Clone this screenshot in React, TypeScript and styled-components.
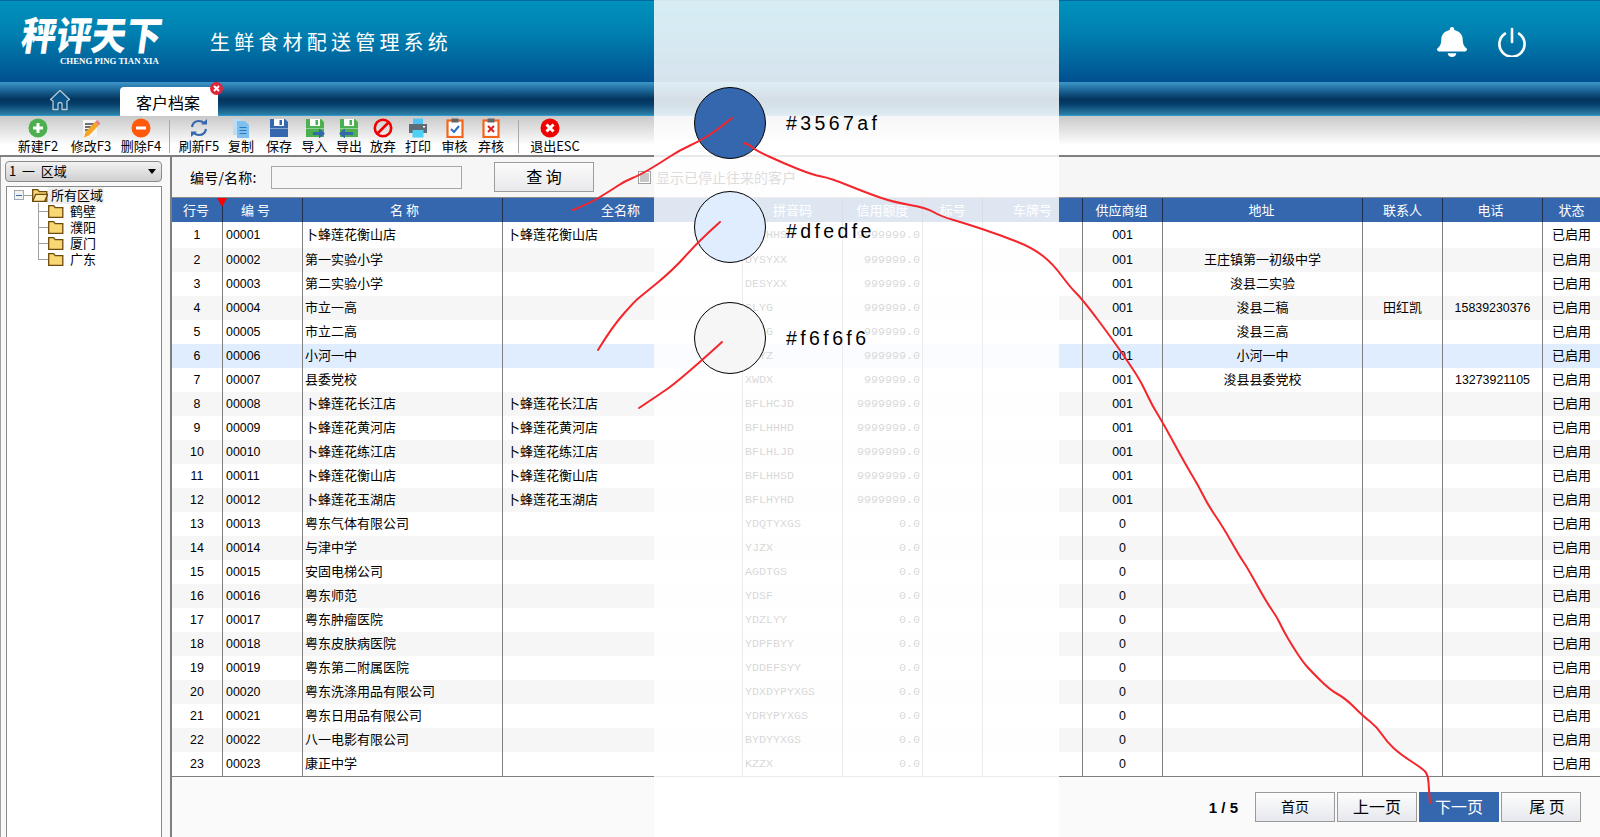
import React from "react";
import styled, { createGlobalStyle } from "styled-components";
import { FaBell } from "react-icons/fa";

const CJK = `"Noto Sans CJK SC", "Liberation Sans", sans-serif`;
const MONO = `"Liberation Mono", "Noto Sans CJK SC", monospace`;
const NUM = `"Liberation Sans", "Noto Sans CJK SC", sans-serif`;

const Global = createGlobalStyle`
  html, body { margin: 0; padding: 0; background: #fff; }
  body { font-family: ${CJK}; color: #000; overflow: hidden; }
  * { box-sizing: border-box; }
`;

const Page = styled.div`
  position: relative;
  width: 1600px;
  height: 837px;
  display: flex;
  flex-direction: column;
  overflow: hidden;
`;

/* ---------- top header ---------- */
const Header = styled.header`
  height: 82px;
  flex: none;
  display: flex;
  align-items: center;
  padding: 0 73px 0 19px;
  border-top: 1px solid #0067a3;
  background: linear-gradient(#0092bc 0%, #0080b0 40%, #00508f 100%);
  color: #fff;
`;
const Logo = styled.div`
  width: 191px;
  display: flex;
  flex-direction: column;
  margin-top: -2px;
`;
const LogoMark = styled.div`
  font-size: 35px;
  font-weight: 900;
  line-height: 38px;
  white-space: nowrap;
  transform: skewX(-8deg) scaleY(1.12);
  transform-origin: left bottom;
`;
const LogoSub = styled.div`
  font-family: "Liberation Serif", serif;
  font-weight: 700;
  font-size: 8.8px;
  line-height: 10px;
  margin: 2px 0 0 41px;
  white-space: nowrap;
`;
const Title = styled.div`
  font-size: 20px;
  letter-spacing: 4.2px;
  line-height: 28px;
  white-space: nowrap;
`;
const HeaderIcons = styled.div`
  margin-left: auto;
  display: flex;
  align-items: center;
  gap: 30px;
  margin-top: 1px;
`;

/* ---------- tab bar ---------- */
const TabBar = styled.nav`
  height: 34px;
  flex: none;
  display: flex;
  align-items: flex-end;
  padding-left: 49px;
  border-bottom: 1px solid #2c9ad0;
  background: linear-gradient(#3d97c8 0%, #1f6c9e 22%, #03355e 52%, #06406c 68%, #2d81a8 100%);
`;
const HomeIcon = styled.svg`
  width: 22px;
  height: 22px;
  margin-bottom: 4px;
  flex: none;
`;
const Tab = styled.div`
  position: relative;
  width: 98px;
  height: 29px;
  margin: 0 0 -1px 49px;
  padding-left: 16px;
  background: #fff;
  border-radius: 4px 4px 0 0;
  font-size: 16px;
  line-height: 30px;
`;
const TabClose = styled.svg`
  position: absolute;
  right: -5px;
  top: -5px;
  width: 13px;
  height: 13px;
`;

/* ---------- toolbar ---------- */
const Toolbar = styled.div`
  height: 41px;
  flex: none;
  display: flex;
  padding-left: 12px;
  border-bottom: 2px solid #7f7f7f;
  background: linear-gradient(#c9c9c9 0%, #e2e2e2 35%, #fff 75%);
`;
const ToolButton = styled.div<{ $w: number }>`
  width: ${(p) => p.$w}px;
  flex: none;
  display: flex;
  flex-direction: column;
  align-items: center;
  padding-top: 2px;
`;
const ToolIcon = styled.svg<{ $shift?: number }>`
  width: 20px;
  height: 20px;
  flex: none;
  margin-right: ${(p) => p.$shift ?? 0}px;
`;
const ToolLabel = styled.span`
  font-size: 13px;
  line-height: 15px;
  white-space: nowrap;
`;
const ToolSep = styled.div<{ $w: number }>`
  width: ${(p) => p.$w}px;
  flex: none;
  display: flex;
  justify-content: center;
  padding: 4px 0 2px;
  &::before {
    content: "";
    width: 1px;
    background: #a8a8a8;
  }
`;

/* ---------- body ---------- */
const Content = styled.div`
  flex: 1;
  min-height: 0;
  display: flex;
`;
const Side = styled.aside`
  width: 170px;
  flex: none;
  display: flex;
  flex-direction: column;
  padding: 4px 8px 0 4px;
  border-left: 1px solid #a0a0a0;
  background: #f8f8f8;
`;
const Select = styled.div`
  height: 21px;
  display: flex;
  align-items: center;
  padding: 0 5px 2px 3px;
  border: 1px solid #8a8a8a;
  border-radius: 4px;
  background: linear-gradient(#f2f2f2, #cfcfcf);
  font-size: 13px;
  white-space: pre;
`;
const Caret = styled.span`
  margin: 2px 0 0 auto;
  border: 4px solid transparent;
  border-top: 5px solid #000;
  border-bottom: 0;
`;
const Tree = styled.div`
  flex: 1;
  margin: 4px 0 0 1px;
  padding: 0 0 0 7px;
  border: 1px solid #8a8a8a;
  border-bottom: 0;
  background: #fff;
`;
const TreeRoot = styled.div`
  height: 16px;
  display: flex;
  align-items: center;
`;
const Expander = styled.span`
  width: 10px;
  height: 10px;
  flex: none;
  display: flex;
  align-items: center;
  justify-content: center;
  border: 1px solid #a0a8b4;
  background: #f2f2f2;
  &::before {
    content: "";
    width: 6px;
    height: 1px;
    background: #3567af;
  }
`;
const RootLink = styled.span`
  width: 8px;
  height: 1px;
  flex: none;
  background: #a0a0a0;
`;
const TreeLabel = styled.span<{ $selected?: boolean }>`
  font-size: 13px;
  line-height: 16px;
  padding: 0 1px 1px 3px;
  margin-left: ${(p) => (p.$selected ? 0 : 3)}px;
  background: ${(p) => (p.$selected ? "#f0f0f0" : "transparent")};
  white-space: nowrap;
`;
const TreeChild = styled.div<{ $last?: boolean }>`
  position: relative;
  height: 16px;
  display: flex;
  align-items: center;
  padding-left: 34px;
  &::before {
    content: "";
    position: absolute;
    left: 24px;
    top: 0;
    width: 10px;
    height: ${(p) => (p.$last ? "8px" : "16px")};
    border-left: 1px solid #a0a0a0;
  }
  &::after {
    content: "";
    position: absolute;
    left: 24px;
    top: 8px;
    width: 10px;
    height: 1px;
    background: #a0a0a0;
  }
`;
const FolderIcon = styled.svg`
  width: 16px;
  height: 14px;
  flex: none;
`;

const Main = styled.main`
  flex: 1;
  min-width: 0;
  display: flex;
  flex-direction: column;
  border-left: 2px solid #7f7f7f;
`;
const Filter = styled.div`
  height: 41px;
  flex: none;
  display: flex;
  align-items: center;
  padding-left: 18px;
  border-bottom: 1px solid #8c8c8c;
  background: #f6f6f6;
`;
const FilterLabel = styled.label`
  width: 81px;
  flex: none;
  font-size: 14px;
  letter-spacing: 0.2px;
  white-space: nowrap;
`;
const FilterInput = styled.div`
  width: 191px;
  height: 23px;
  flex: none;
  border: 1px solid #a8a8a8;
  background: #f6f6f6;
`;
const QueryButton = styled.div`
  width: 100px;
  height: 30px;
  flex: none;
  margin-left: 32px;
  padding-bottom: 2px;
  display: flex;
  align-items: center;
  justify-content: center;
  border: 1px solid #9c9c9c;
  background: linear-gradient(#fbfbfb, #e9e9ec);
  font-size: 16px;
  white-space: pre;
`;
const Check = styled.span`
  width: 13px;
  height: 13px;
  flex: none;
  margin-left: 44px;
  display: flex;
  align-items: center;
  justify-content: center;
  border: 1px solid #a0a0a0;
  background: #fff;
  &::before {
    content: "";
    width: 9px;
    height: 9px;
    background: #c8c8c8;
  }
`;
const CheckText = styled.span`
  margin-left: 5px;
  font-size: 14px;
  color: #222;
  white-space: nowrap;
`;

const COLUMNS = "51px 80px 200px 240px 100px 80px 60px 100px 80px 200px 80px 100px 57px";
const HeadRow = styled.div`
  position: relative;
  height: 24px;
  flex: none;
  display: grid;
  grid-template-columns: ${COLUMNS};
  background: #3567af;
`;
const HeadCell = styled.div<{ $shift: number }>`
  display: flex;
  align-items: center;
  justify-content: center;
  padding: 0 ${(p) => (p.$shift < 0 ? -2 * p.$shift : 0)}px 2px ${(p) => (p.$shift > 0 ? 2 * p.$shift : 0)}px;
  border-right: 1px solid #1c2f50;
  color: #fff;
  font-size: 13px;
  white-space: pre;
  &:last-of-type { border-right: 0; }
`;
const SortMark = styled.span`
  position: absolute;
  left: 45px;
  top: 0;
  border-left: 5.5px solid transparent;
  border-right: 5.5px solid transparent;
  border-top: 9px solid #ff0000;
`;
const Rows = styled.div`
  flex: 1;
  min-height: 0;
  display: flex;
  flex-direction: column;
`;
const Row = styled.div<{ $tone: "white" | "stripe" | "active"; $first?: boolean }>`
  height: ${(p) => (p.$first ? 26 : 24)}px;
  flex: none;
  display: grid;
  grid-template-columns: ${COLUMNS};
  background: ${(p) => (p.$tone === "active" ? "#dfedfe" : p.$tone === "stripe" ? "#f6f6f6" : "#fff")};
`;
const Cell = styled.div<{ $align?: "left" | "center" | "right"; $kind?: "text" | "num" | "code"; $pad?: number }>`
  display: flex;
  align-items: center;
  justify-content: ${(p) => (p.$align === "center" ? "center" : p.$align === "right" ? "flex-end" : "flex-start")};
  padding-bottom: ${(p) => (p.$kind === "num" || p.$kind === "code" ? 0 : 3)}px;
  padding-left: ${(p) => p.$pad ?? 0}px;
  padding-right: ${(p) => (p.$align === "right" ? 2 : 0)}px;
  border-right: 1px solid #808080;
  font-family: ${(p) => (p.$kind === "num" ? NUM : p.$kind === "code" ? MONO : CJK)};
  font-size: ${(p) => (p.$kind === "num" ? "12.4px" : p.$kind === "code" ? "11.7px" : "13px")};
  white-space: nowrap;
  overflow: hidden;
  &:last-child { border-right: 0; }
`;
const Footer = styled.footer`
  height: 61px;
  flex: none;
  display: flex;
  align-items: flex-start;
  justify-content: flex-end;
  gap: 2px;
  padding: 15px 19px 0 0;
  border-top: 1px solid #808080;
  background: #fafafa;
`;
const PageCount = styled.span`
  margin-right: 15px;
  font-family: "Liberation Sans", sans-serif;
  font-weight: 700;
  font-size: 15px;
  line-height: 32px;
  white-space: pre;
`;
const PageButton = styled.div<{ $active?: boolean; $small?: boolean; $offset?: number }>`
  width: 80px;
  height: 30px;
  display: flex;
  align-items: center;
  justify-content: center;
  padding-left: ${(p) => p.$offset ?? 0}px;
  padding-bottom: 2px;
  border: ${(p) => (p.$active ? "0" : "1px solid #9a9a9a")};
  background: ${(p) => (p.$active ? "#3567af" : "linear-gradient(#fdfdfd, #e6e8ee)")};
  color: ${(p) => (p.$active ? "#fff" : "#000")};
  font-size: ${(p) => (p.$small ? 14 : 16)}px;
  white-space: pre;
`;

/* ---------- annotation layer over the screenshot ---------- */
const Veil = styled.div`
  position: absolute;
  left: 654px;
  top: 0;
  width: 405px;
  height: 837px;
  background: rgba(255, 255, 255, 0.84);
`;
const Swatch = styled.div<{ $color: string; $top: number }>`
  position: absolute;
  left: 694px;
  top: ${(p) => p.$top}px;
  width: 72px;
  height: 72px;
  border: 1px solid #000;
  border-radius: 50%;
  background: ${(p) => p.$color};
`;
const SwatchText = styled.div<{ $top: number }>`
  position: absolute;
  left: 786px;
  top: ${(p) => p.$top}px;
  font-family: "Liberation Sans", sans-serif;
  font-size: 19.5px;
  line-height: 28px;
  letter-spacing: 3.4px;
  color: #000;
`;
const Ink = styled.svg`
  position: absolute;
  inset: 0;
  width: 1600px;
  height: 837px;
  pointer-events: none;
`;

type P = [number, number];
const smooth = (pts: P[]) => {
  let d = `M${pts[0][0]} ${pts[0][1]}`;
  for (let i = 1; i < pts.length - 1; i++) {
    const mx = (pts[i][0] + pts[i + 1][0]) / 2;
    const my = (pts[i][1] + pts[i + 1][1]) / 2;
    d += ` Q${pts[i][0]} ${pts[i][1]} ${mx} ${my}`;
  }
  const l = pts[pts.length - 1];
  return d + ` L${l[0]} ${l[1]}`;
};

const strokes: P[][] = [
  [[573, 210], [590, 203], [610, 191], [625, 181], [640, 175], [660, 163], [680, 150], [700, 141], [717, 130], [732, 118]],
  [[598, 350], [612, 327], [635, 301], [640, 297], [673, 270], [697, 243], [720, 222]],
  [[639, 408], [660, 394], [673, 385], [700, 362], [722, 342]],
  [[744, 143], [750, 145], [755, 150], [783, 163], [813, 175], [830, 178], [867, 193], [893, 202], [927, 208], [940, 216], [967, 224], [1000, 235], [1033, 248], [1053, 264], [1070, 287], [1083, 300], [1113, 340], [1137, 375], [1145, 390], [1152, 405], [1163, 423], [1187, 467], [1198, 485], [1208, 505], [1223, 527], [1240, 557], [1247, 567], [1267, 603], [1277, 617], [1283, 630], [1293, 647], [1303, 662], [1310, 670], [1330, 690], [1345, 698], [1363, 716], [1377, 727], [1387, 742], [1400, 754], [1423, 769], [1428, 775], [1429, 790], [1430, 803]],
];

/* ---------- icons ---------- */
const Bell = styled(FaBell)`
  width: 30px;
  height: 30px;
  color: #fff;
`;
const PowerIcon = () => (
  <svg width="30" height="30" viewBox="0 0 30 30" fill="none" stroke="#fff" strokeWidth="2.6" strokeLinecap="round">
    <path d="M15 2v13" />
    <path d="M8 6.6a12.6 12.6 0 1 0 14 0" />
  </svg>
);
const Home = () => (
  <HomeIcon viewBox="0 0 22 22" fill="none">
    <path d="M11 1.5 1.5 10.5 4 12v8.5h5v-5q0-2 2-2t2 2v5h5V12l2.500-1.500z" fill="#0a5488" stroke="#b9c9d6" strokeWidth="1.300" strokeLinejoin="round" />
  </HomeIcon>
);
const Circle = ({ c, children }: { c: string; children: React.ReactNode }) => (
  <>
    <circle cx="10" cy="10" r="9.500" fill={c} />
    {children}
  </>
);
const Floppy = ({ c }: { c: string }) => (
  <>
    <path d="M1 1h15l3 3v15H1z" fill={c} />
    <rect x="5" y="1" width="10" height="7" fill="#fff" />
    <rect x="10.500" y="2" width="2.500" height="5" fill={c} />
    <rect x="1" y="10" width="18" height="0.800" fill="#fff" opacity="0.5" />
  </>
);
const Clipboard = ({ children }: { children: React.ReactNode }) => (
  <>
    <rect x="2.500" y="2.500" width="15" height="16.500" fill="#fff" stroke="#f2651f" strokeWidth="2.200" />
    <rect x="6.500" y="0.500" width="7" height="4" fill="#666" />
    {children}
  </>
);
const icons: Record<string, React.ReactNode> = {
  add: (
    <Circle c="#4caf50">
      <path d="M10 5v10M5 10h10" stroke="#fff" strokeWidth="3" />
    </Circle>
  ),
  edit: (
    <>
      <rect x="2" y="2" width="14" height="17" fill="#f4f4f4" />
      <path d="M4 6h9M4 9h7M4 12h4" stroke="#444" strokeWidth="1.500" />
      <path d="M3 19.500l1.500-5.500L14 4l3.500 3.500L8 17.500z" fill="#f5a623" />
      <path d="M14 4l2-2 3.500 3.500-2 2z" fill="#ef7c7c" />
    </>
  ),
  remove: (
    <Circle c="#ff5a0a">
      <path d="M5 10h10" stroke="#fff" strokeWidth="3" />
    </Circle>
  ),
  refresh: (
    <g fill="none" stroke="#3567af" strokeWidth="2.200">
      <path d="M3 9q1-6 7-6 3 0 5 2" />
      <path d="M17 11q-1 6-7 6-3 0-5-2" />
      <path d="M12 6.500h6V1z" fill="#3567af" stroke="none" />
      <path d="M8 13.500H2V19z" fill="#3567af" stroke="none" />
    </g>
  ),
  copy: (
    <>
      <path d="M2 1h9v16H2z" fill="#b9dcf7" />
      <path d="M6 3h8l4 4v13H6z" fill="#7fc0ef" />
      <path d="M8.500 9.500h7M8.500 12.500h7M8.500 15.500h7" stroke="#2a78c0" strokeWidth="1.200" />
    </>
  ),
  save: <Floppy c="#3567af" />,
  import: (
    <>
      <Floppy c="#4caf50" />
      <path d="M8 14h6v-3.500l6 5-6 5V17H8z" fill="#3567af" />
    </>
  ),
  export: (
    <>
      <Floppy c="#4caf50" />
      <path d="M14 14H6v-3.500l-6 5 6 5V17h8z" fill="#3567af" />
    </>
  ),
  abandon: (
    <g fill="none" stroke="#f00000" strokeWidth="2.600">
      <circle cx="10" cy="10" r="8.200" />
      <path d="M4.500 15.500l11-11" />
    </g>
  ),
  print: (
    <>
      <rect x="5" y="0.500" width="10" height="6" fill="#4fc3f7" />
      <path d="M1 6h18v9H1z" fill="#5f6b75" />
      <rect x="15" y="8" width="2" height="1.500" fill="#fff" />
      <rect x="4.500" y="12" width="11" height="7.500" fill="#4dd0f5" />
    </>
  ),
  audit: (
    <Clipboard>
      <path d="M6 11l3 3 5-6" fill="none" stroke="#2f6fc0" strokeWidth="2" />
    </Clipboard>
  ),
  reject: (
    <Clipboard>
      <path d="M7 8l6 6M13 8l-6 6" fill="none" stroke="#e02020" strokeWidth="2" />
    </Clipboard>
  ),
  exit: (
    <Circle c="#f00000">
      <path d="M6.500 6.500l7 7M13.500 6.500l-7 7" stroke="#fff" strokeWidth="3" />
    </Circle>
  ),
};

const Folder = ({ open }: { open?: boolean }) => (
  <FolderIcon viewBox="0 0 16 14">
    <path d="M.7 13.300V1.700h5l1.500 2h7.600v9.600z" fill="#f8d775" stroke="#6e4a0c" strokeWidth="1.300" />
    {open && <path d="M.7 13.300l3-7h12l-3 7z" fill="#fde9a6" stroke="#6e4a0c" strokeWidth="1.300" />}
  </FolderIcon>
);

/* ---------- data ---------- */
type Tool = { key: string; label: string; w: number; shift?: number } | { sep: number };
const tools: Tool[] = [
  { key: "add", label: "新建F2", w: 52 },
  { key: "edit", label: "修改F3", w: 54 },
  { key: "remove", label: "删除F4", w: 46 },
  { sep: 10 },
  { key: "refresh", label: "刷新F5", w: 50 },
  { key: "copy", label: "复制", w: 34 },
  { key: "save", label: "保存", w: 42 },
  { key: "import", label: "导入", w: 29 },
  { key: "export", label: "导出", w: 40 },
  { key: "abandon", label: "放弃", w: 28 },
  { key: "print", label: "打印", w: 42 },
  { key: "audit", label: "审核", w: 31 },
  { key: "reject", label: "弃核", w: 42 },
  { sep: 12 },
  { key: "exit", label: "退出ESC", w: 62, shift: 10 },
];

const heads: [string, number][] = [
  ["行号", -1], ["编 号", -7], ["名 称", 2], ["全名称", -2], ["拼音码", 0], ["信用额度", 0], ["标号", 0],
  ["车牌号", 0], ["供应商组", -1], ["地址", -1], ["联系人", 0], ["电话", -2], ["状态", 0],
];

type R = [string, string, string, string?, string?, string?];
const records: R[] = [
  ["卜蜂莲花衡山店", "卜蜂莲花衡山店", "BFLHHSD"],
  ["第一实验小学", "", "DYSYXX", "王庄镇第一初级中学"],
  ["第二实验小学", "", "DESYXX", "浚县二实验"],
  ["市立一高", "", "SLYG", "浚县二稿", "田红凯", "15839230376"],
  ["市立二高", "", "SLEG", "浚县三高"],
  ["小河一中", "", "XHYZ", "小河一中"],
  ["县委党校", "", "XWDX", "浚县县委党校", "", "13273921105"],
  ["卜蜂莲花长江店", "卜蜂莲花长江店", "BFLHCJD"],
  ["卜蜂莲花黄河店", "卜蜂莲花黄河店", "BFLHHHD"],
  ["卜蜂莲花练江店", "卜蜂莲花练江店", "BFLHLJD"],
  ["卜蜂莲花衡山店", "卜蜂莲花衡山店", "BFLHHSD"],
  ["卜蜂莲花玉湖店", "卜蜂莲花玉湖店", "BFLHYHD"],
  ["粤东气体有限公司", "", "YDQTYXGS"],
  ["与津中学", "", "YJZX"],
  ["安固电梯公司", "", "AGDTGS"],
  ["粤东师范", "", "YDSF"],
  ["粤东肿瘤医院", "", "YDZLYY"],
  ["粤东皮肤病医院", "", "YDPFBYY"],
  ["粤东第二附属医院", "", "YDDEFSYY"],
  ["粤东洗涤用品有限公司", "", "YDXDYPYXGS"],
  ["粤东日用品有限公司", "", "YDRYPYXGS"],
  ["八一电影有限公司", "", "BYDYYXGS"],
  ["康正中学", "", "KZZX"],
];
const credit = (i: number) => (i >= 12 ? "0.0" : i === 0 || i >= 7 ? "9999999.0" : "999999.0");

export default function App() {
  return (
    <Page>
      <Global />
      <Header>
        <Logo>
          <LogoMark>秤评天下</LogoMark>
          <LogoSub>CHENG PING TIAN XIA</LogoSub>
        </Logo>
        <Title>生鲜食材配送管理系统</Title>
        <HeaderIcons>
          <Bell preserveAspectRatio="none" />
          <PowerIcon />
        </HeaderIcons>
      </Header>

      <TabBar>
        <Home />
        <Tab>
          客户档案
          <TabClose viewBox="0 0 13 13">
            <circle cx="6.500" cy="6.500" r="6.500" fill="#e0263a" />
            <path d="M4 4l5 5M9 4l-5 5" stroke="#fff" strokeWidth="2" />
          </TabClose>
        </Tab>
      </TabBar>

      <Toolbar>
        {tools.map((t, i) =>
          "sep" in t ? (
            <ToolSep key={i} $w={t.sep} />
          ) : (
            <ToolButton key={t.key} $w={t.w}>
              <ToolIcon viewBox="0 0 20 20" $shift={t.shift}>
                {icons[t.key]}
              </ToolIcon>
              <ToolLabel>{t.label}</ToolLabel>
            </ToolButton>
          )
        )}
      </Toolbar>

      <Content>
        <Side>
          <Select>
            {"1  一  区域"}
            <Caret />
          </Select>
          <Tree>
            <TreeRoot>
              <Expander />
              <RootLink />
              <Folder open />
              <TreeLabel $selected>所有区域</TreeLabel>
            </TreeRoot>
            {["鹤壁", "濮阳", "厦门", "广东"].map((n, i) => (
              <TreeChild key={n} $last={i === 3}>
                <Folder />
                <TreeLabel>{n}</TreeLabel>
              </TreeChild>
            ))}
          </Tree>
        </Side>

        <Main>
          <Filter>
            <FilterLabel>编号/名称:</FilterLabel>
            <FilterInput />
            <QueryButton>{"查 询"}</QueryButton>
            <Check />
            <CheckText>显示已停止往来的客户</CheckText>
          </Filter>
          <HeadRow>
            {heads.map(([h, s]) => (
              <HeadCell key={h} $shift={s}>{h}</HeadCell>
            ))}
            <SortMark />
          </HeadRow>
          <Rows>
            {records.map((r, i) => (
              <Row
                key={i}
                $first={i === 0}
                $tone={i === 5 ? "active" : i % 2 === 1 ? "stripe" : "white"}
              >
                <Cell $align="center" $kind="num">{i + 1}</Cell>
                <Cell $kind="num" $pad={3}>{String(i + 1).padStart(5, "0")}</Cell>
                <Cell $pad={2}>{r[0]}</Cell>
                <Cell $pad={4}>{r[1]}</Cell>
                <Cell $kind="code" $pad={2}>{r[2]}</Cell>
                <Cell $kind="code" $align="right">{credit(i)}</Cell>
                <Cell />
                <Cell />
                <Cell $kind="num" $align="center">{i < 12 ? "001" : "0"}</Cell>
                <Cell $align="center">{r[3]}</Cell>
                <Cell $align="center">{r[4]}</Cell>
                <Cell $kind="num" $align="center">{r[5]}</Cell>
                <Cell $align="center">已启用</Cell>
              </Row>
            ))}
          </Rows>
          <Footer>
            <PageCount>{"1 / 5"}</PageCount>
            <PageButton $small>首页</PageButton>
            <PageButton>上一页</PageButton>
            <PageButton $active>下一页</PageButton>
            <PageButton $offset={12}>{"尾 页"}</PageButton>
          </Footer>
        </Main>
      </Content>

      <Veil />
      <Swatch $color="#3567af" $top={87} />
      <Swatch $color="#dfedfe" $top={191} />
      <Swatch $color="#f6f6f6" $top={302} />
      <SwatchText $top={109}>#3567af</SwatchText>
      <SwatchText $top={217}>#dfedfe</SwatchText>
      <SwatchText $top={324}>#f6f6f6</SwatchText>
      <Ink viewBox="0 0 1600 837" fill="none">
        {strokes.map((s, i) => (
          <path key={i} d={smooth(s)} stroke="#f4262c" strokeWidth="2" strokeLinecap="round" strokeLinejoin="round" />
        ))}
      </Ink>
    </Page>
  );
}
